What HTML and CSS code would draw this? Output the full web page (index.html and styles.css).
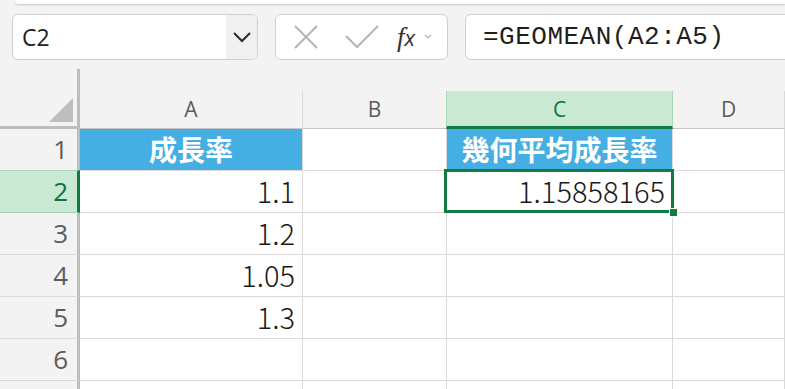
FILE: index.html
```html
<!DOCTYPE html>
<html lang="ja">
<head>
    <meta charset="UTF-8">
    <title>GEOMEAN</title>
    <link rel="stylesheet" href="styles.css">
</head>
<body>

    <!-- ribbon edge -->
    <div class="ribbon"></div>

    <!-- Name box & formula bar -->
    <div class="toolbar">
        <div class="namebox">
            <span class="name">C2</span>
            <span class="drop">
                <svg width="20" height="12" viewBox="0 0 20 12"><path d="M2 2 L10 10 L18 2" fill="none" stroke="#2b2b2b" stroke-width="2"/></svg>
            </span>
        </div>
        <div class="fxbox">
            <svg width="26" height="26" viewBox="0 0 26 26"><path d="M2 2 L24 24 M24 2 L2 24" stroke="#b5b5b5" stroke-width="2" fill="none"/></svg>
            <svg width="34" height="24" viewBox="0 0 34 24"><path d="M1 11 L12 22 L33 1" stroke="#b5b5b5" stroke-width="2" fill="none"/></svg>
            <span class="fx"><i>f</i><span class="x">x</span></span>
            <svg width="8" height="6" viewBox="0 0 8 6"><path d="M1 1 L4 4 L7 1" stroke="#b0b0b0" stroke-width="1.2" fill="none"/></svg>
        </div>
        <div class="formula">=GEOMEAN(A2:A5)</div>
    </div>

    <!-- Sheet -->
    <div class="sheet">
        <div class="corner"><div class="corner-in"><span class="tri"></span></div></div>
        <div class="col-head">A</div>
        <div class="col-head">B</div>
        <div class="col-head active">C</div>
        <div class="col-head">D</div>

        <div class="row-head">1</div>
        <div class="cell title">成長率</div>
        <div class="cell"></div>
        <div class="cell title">幾何平均成長率</div>
        <div class="cell"></div>

        <div class="row-head active">2</div>
        <div class="cell num">1.1</div>
        <div class="cell"></div>
        <div class="cell num selected">1.15858165<span class="handle"></span></div>
        <div class="cell"></div>

        <div class="row-head">3</div>
        <div class="cell num">1.2</div>
        <div class="cell"></div>
        <div class="cell"></div>
        <div class="cell"></div>

        <div class="row-head">4</div>
        <div class="cell num">1.05</div>
        <div class="cell"></div>
        <div class="cell"></div>
        <div class="cell"></div>

        <div class="row-head">5</div>
        <div class="cell num">1.3</div>
        <div class="cell"></div>
        <div class="cell"></div>
        <div class="cell"></div>

        <div class="row-head">6</div>
        <div class="cell"></div>
        <div class="cell"></div>
        <div class="cell"></div>
        <div class="cell"></div>

        <div class="row-head"></div>
        <div class="cell"></div>
        <div class="cell"></div>
        <div class="cell"></div>
        <div class="cell"></div>
    </div>

</body>
</html>
```

FILE: styles.css
```css
* {
    box-sizing: border-box;
    margin: 0;
    padding: 0;
}

body {
    background: #f3f3f3;
    font-family: 'Open Sans', 'Noto Sans CJK JP', sans-serif;
    width: 785px;
    height: 389px;
    overflow: hidden;
}

.ribbon {
    height: 4px;
    margin-left: 15px;
    background: #fff;
    border-radius: 0 0 0 8px;
    box-shadow: 0 1px 2px rgba(0,0,0,0.18);
}

.toolbar {
    display: flex;
    gap: 17px;
    height: 46px;
    margin-top: 10px;
    padding-left: 12px;
}

.namebox, .fxbox, .formula {
    background: #fff;
    border: 1px solid #d0d0d0;
    border-radius: 6px;
}

.namebox {
    width: 246px;
    display: flex;
    overflow: hidden;
}

.name {
    flex: 1;
    padding-left: 9px;
    font-family: 'Open Sans', sans-serif;
    font-size: 23px;
    line-height: 44px;
    color: #1f1f1f;
}

.drop {
    width: 31px;
    background: #f0f0f0;
    display: flex;
    align-items: center;
    justify-content: center;
}

.fxbox {
    width: 173px;
    display: flex;
    align-items: center;
    padding-left: 17px;
}

.fxbox svg:nth-child(2) {
    margin-left: 26px;
}

.fx {
    margin-left: 18px;
    font-family: 'Liberation Serif', serif;
    font-size: 27px;
    color: #333;
    line-height: 1;
}

.fx .x {
    font-family: 'Open Sans', sans-serif;
    font-style: italic;
    font-size: 22px;
    margin-left: 0;
}

.fxbox svg:last-child {
    margin-left: 9px;
}

.formula {
    flex: 1;
    margin-right: -30px;
    padding-left: 17px;
    font-family: 'Liberation Mono', monospace;
    font-size: 26px;
    letter-spacing: 0.5px;
    line-height: 44px;
    color: #1f1f1f;
}

.sheet {
    display: grid;
    grid-template-columns: 80px 223px 144px 226px 1fr;
    grid-template-rows: 69px repeat(7, 42px);
    font-family: 'Noto Sans CJK JP', sans-serif;
}

.corner {
    border-bottom: 3px solid #bdbdbd;
}

.corner-in {
    height: 57px;
    margin-top: 9px;
    border-right: 3px solid #bdbdbd;
    display: flex;
    align-items: flex-end;
    justify-content: flex-end;
    padding: 0 4px 4px 0;
}

.tri {
    width: 0;
    height: 0;
    border-left: 24px solid transparent;
    border-bottom: 24px solid #bdbdbd;
}

.col-head {
    align-self: end;
    height: 38px;
    border-right: 1px solid #dadada;
    border-bottom: 1px solid #c6c6c6;
    font-family: 'Open Sans', sans-serif;
    font-size: 21px;
    color: #5c5c5c;
    text-align: center;
    line-height: 37px;
}

.col-head.active {
    background: #cae9d5;
    color: #0f703b;
    border-left: 1px solid #a6d9b8;
    border-right: 1px solid #a6d9b8;
    border-bottom: 3px solid #107c41;
    margin-left: -1px;
}

.row-head {
    border-right: 3px solid #bdbdbd;
    border-bottom: 1px solid #dadada;
    font-family: 'Open Sans', sans-serif;
    font-size: 26px;
    color: #5c5c5c;
    text-align: right;
    padding-right: 9px;
    line-height: 41px;
}

.row-head.active {
    background: #cae9d5;
    color: #0f703b;
    border-right-color: #107c41;
    border-bottom-color: #a6d9b8;
    margin-top: -1px;
    border-top: 1px solid #a6d9b8;
}

.cell {
    background: #fff;
    border-right: 1px solid #dadada;
    border-bottom: 1px solid #dadada;
}

.title {
    background: #45aee2;
    color: #fff;
    font-weight: bold;
    font-size: 28px;
    text-align: center;
    line-height: 41px;
}

.num {
    text-align: right;
    padding-right: 7px;
    font-size: 29px;
    font-weight: 300;
    color: #1a1a1a;
    line-height: 38px;
}

.selected {
    position: relative;
}

.selected::after {
    content: "";
    position: absolute;
    top: -2px;
    left: -3px;
    right: -2px;
    bottom: -1px;
    border: 3px solid #107c41;
}

.handle {
    position: absolute;
    right: -6px;
    bottom: -5px;
    width: 9px;
    height: 9px;
    background: #107c41;
    border: 1px solid #fff;
    z-index: 2;
}
```
